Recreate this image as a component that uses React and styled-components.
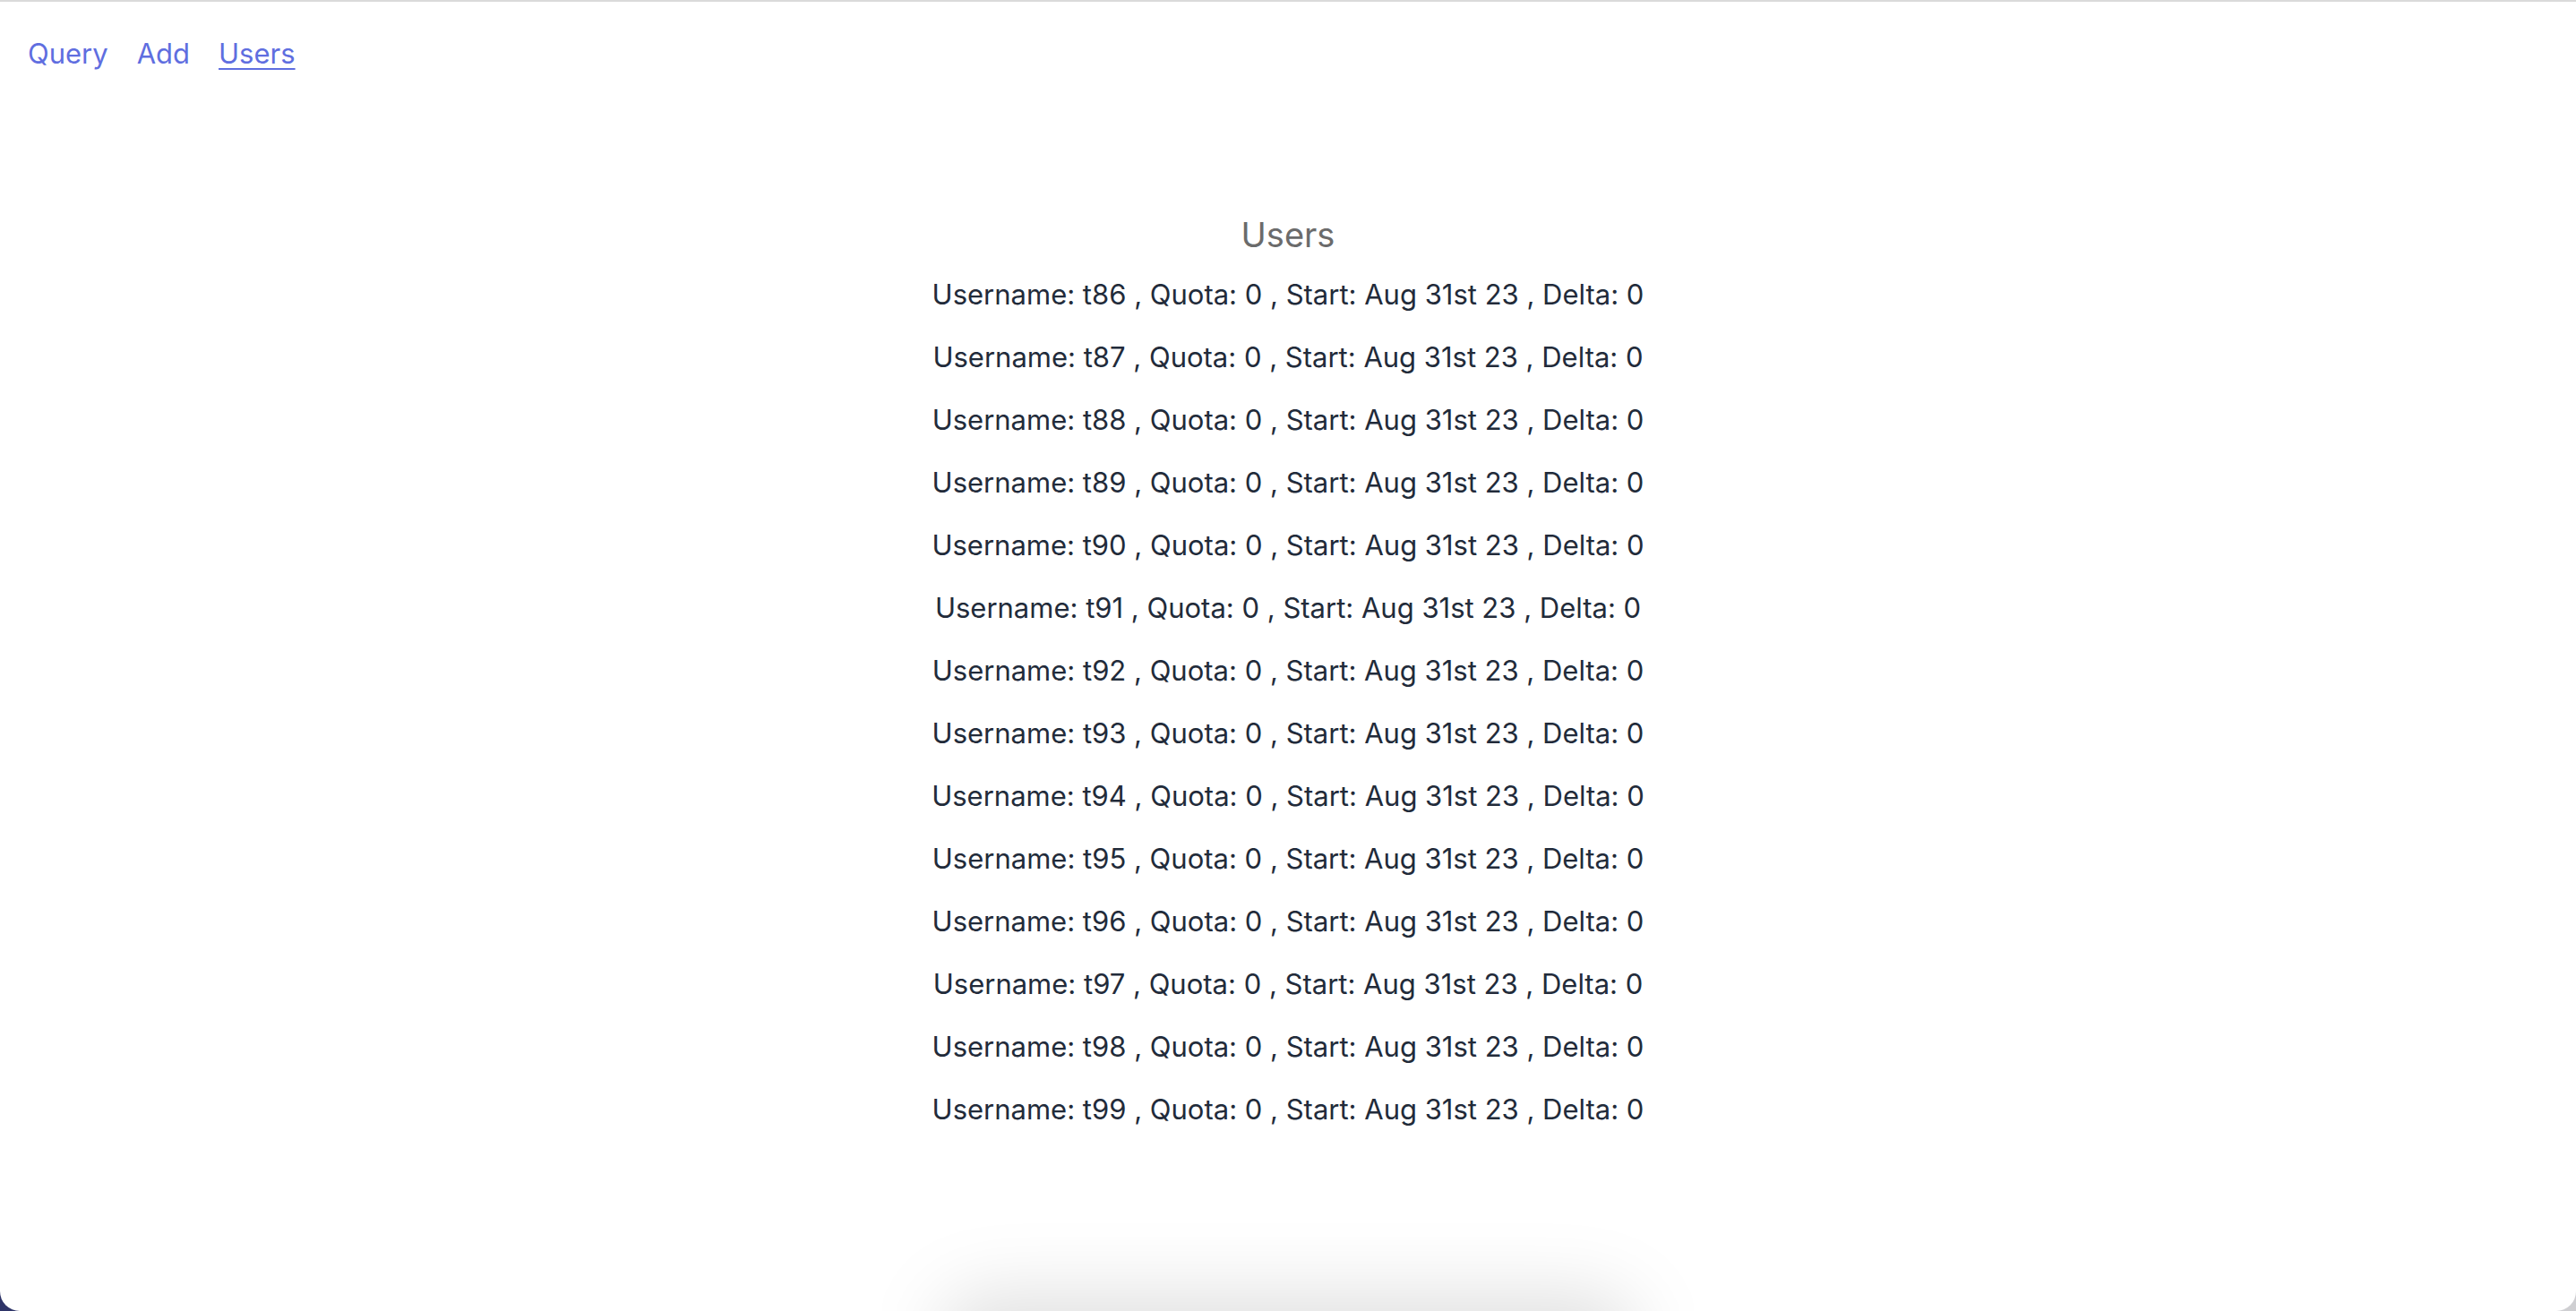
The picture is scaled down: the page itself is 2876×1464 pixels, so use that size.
import React from 'react'
import styled, { createGlobalStyle } from 'styled-components'

const GlobalStyle = createGlobalStyle`
    html, body {
        margin: 0;
        padding: 0;
        height: 100%;
    }
    body {
        background: linear-gradient(90deg, #2e3468 0%, #6a6f99 30%, #c9c9cf 70%, #cfcfd2 100%);
        font-family: Inter, "Noto Sans", "Liberation Sans", sans-serif;
        overflow: hidden;
    }
`

const Window = styled.div`
    position: relative;
    height: 100vh;
    box-sizing: border-box;
    background: #ffffff;
    border-top: 2px solid #dadada;
    border-radius: 0 0 22px 22px;
    overflow: hidden;
`

const Nav = styled.nav`
    display: flex;
    gap: 32px;
    padding: 39px 0 0 31px;
`

const NavLink = styled.a`
    font-size: 31px;
    color: #5f6ee0;
    text-decoration: ${p => (p.$active ? 'underline' : 'none')};
    text-decoration-thickness: 2px;
    text-underline-offset: 5px;
    cursor: pointer;
`

const Main = styled.main`
    display: flex;
    flex-direction: column;
    align-items: center;
    padding-top: 161px;
`

const Heading = styled.h2`
    margin: 0 0 26px;
    font-size: 38px;
    font-weight: 400;
    color: #6b6b6b;
`

const List = styled.ul`
    list-style: none;
    margin: 0;
    padding: 0;
    display: flex;
    flex-direction: column;
    align-items: center;
    gap: 34px;
`

const Row = styled.li`
    font-size: 31px;
    line-height: 36px;
    color: #222b3a;
`

const DockShadow = styled.div`
    position: absolute;
    left: 50%;
    bottom: -90px;
    width: 780px;
    height: 110px;
    transform: translateX(-50%);
    border-radius: 60px;
    background: rgba(0, 0, 0, 0.12);
    filter: blur(40px);
    pointer-events: none;
`

const users = Array.from({ length: 14 }, (_, i) => ({
    name: 't' + (86 + i),
    quota: 0,
    start: 'Aug 31st 23',
    delta: 0,
}))

export default function App() {
    return (
        <>
            <GlobalStyle />
            <Window>
                <Nav>
                    <NavLink>Query</NavLink>
                    <NavLink>Add</NavLink>
                    <NavLink $active>Users</NavLink>
                </Nav>
                <Main>
                    <Heading>Users</Heading>
                    <List>
                        {users.map(u => (
                            <Row key={u.name}>
                                Username: {u.name} , Quota: {u.quota} , Start: {u.start} , Delta: {u.delta}
                            </Row>
                        ))}
                    </List>
                </Main>
                <DockShadow />
            </Window>
        </>
    )
}
